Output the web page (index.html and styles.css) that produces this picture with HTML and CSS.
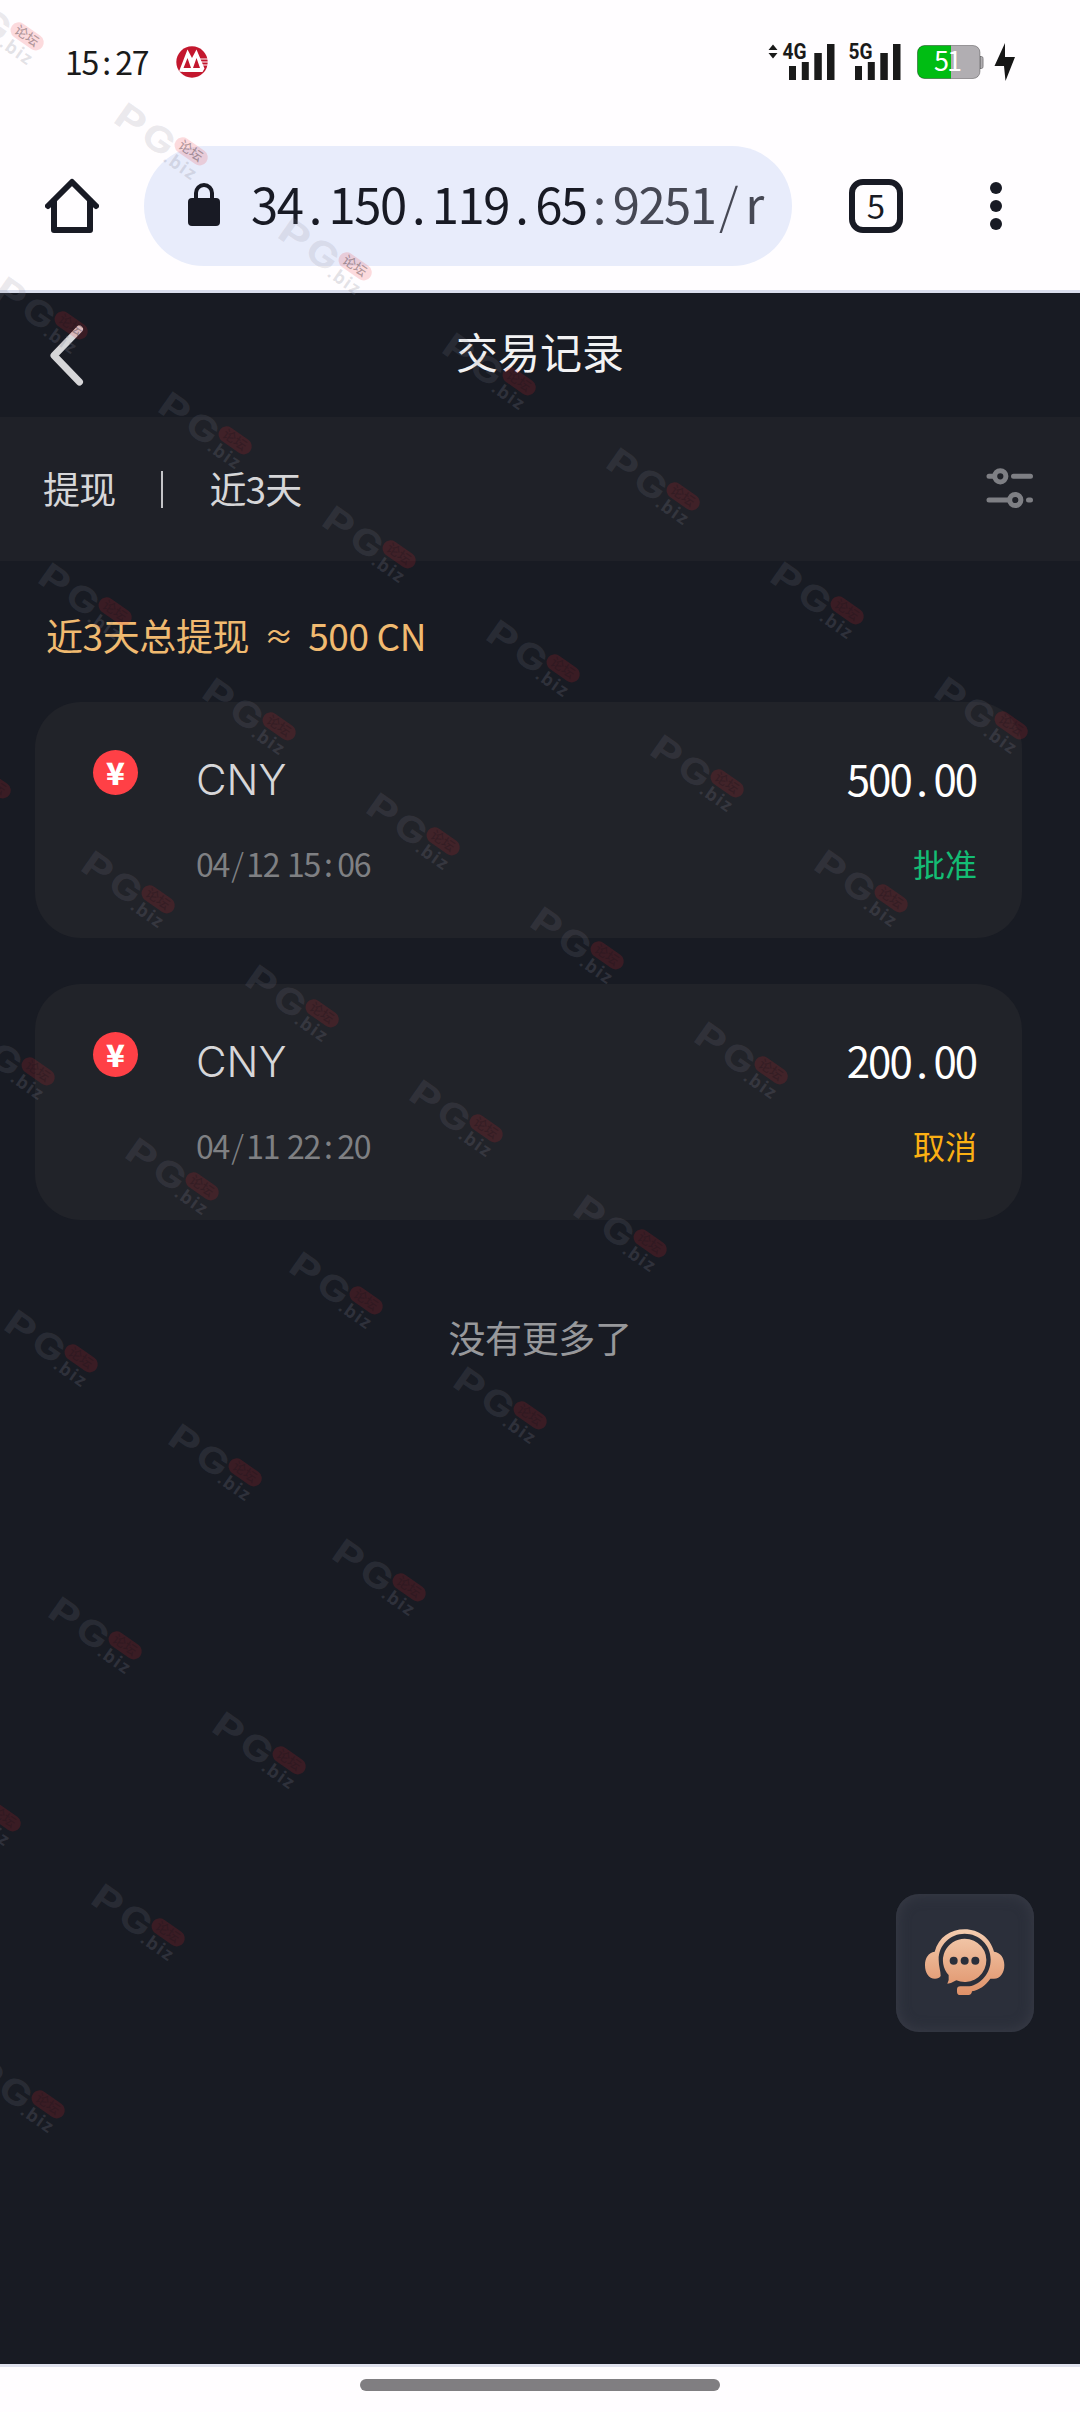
FILE: index.html
```html
<!DOCTYPE html>
<html lang="zh-CN">
<head>
<meta charset="utf-8">
<title>交易记录</title>
<link rel="stylesheet" href="styles.css">
</head>
<body>
<div class="screen">
  <div class="status-bar">
    <span class="clock num">15<i>:</i>27</span>
    <svg class="bank-icon" width="32" height="32" viewBox="0 0 32 32">
      <circle cx="16" cy="16" r="15.7" fill="#c3172e"/>
      <path d="M3 25.500 L11.500 3.500 L16 12 L20.500 3.500 L28.500 22.500 L26.500 26 H7 L5.500 22.500 H9 L11.500 13 L14 22.500 H18 L20.500 13 L24 22.500 H8 L6.500 26Z" fill="#fff"/>
      <path d="M11.500 12 L7.500 22 H15 Z M20.500 12 L17 22 H24 Z" fill="#c3172e"/>
      <path d="M23 13 H32 M24 16 H32 M25 19 H32" stroke="#fff" stroke-width="1"/>
    </svg>
    <div class="status-icons">
      <svg class="signal" width="68" height="52" viewBox="767 36 68 52">
        <path d="M768.500 50 L773 44.500 L777.500 50Z M768.500 53 L773 58.500 L777.500 53Z" fill="#1a1a1a"/>
        <text x="782.500" y="59" textLength="24" lengthAdjust="spacingAndGlyphs" class="net">4G</text>
        <path d="M789 66h7v14h-7z M801.800 62h7v18h-7z M814.300 53h7.500v27h-7.500z M827 44h7.500v36h-7.500z" fill="#1a1a1a"/>
      </svg>
      <svg class="signal second" width="53" height="52" viewBox="848 36 53 52">
        <text x="848.500" y="59" textLength="24" lengthAdjust="spacingAndGlyphs" class="net">5G</text>
        <path d="M855 66h7v14h-7z M867.800 62h7v18h-7z M880.300 53h7.500v27h-7.500z M893 44h7.500v36h-7.500z" fill="#1a1a1a"/>
      </svg>
      <svg class="battery" width="68" height="52" viewBox="917 37 68 52">
        <path d="M980 57.500h1.500q1.500 0 1.500 2v8q0 2-1.500 2h-1.500z" fill="#b1aeb2" stroke="#828083"/>
        <rect x="917.500" y="46.500" width="62.500" height="33" rx="7" fill="#b1aeb2"/>
        <path d="M951 46.500h-26.500a7 7 0 0 0-7 7v19a7 7 0 0 0 7 7h26.500z" fill="#00bd13"/>
        <rect x="917.500" y="46.500" width="62.500" height="33" rx="7" fill="none" stroke="#000" stroke-opacity=".3"/>
        <text x="934" y="72" textLength="28" class="level">51</text>
      </svg>
      <svg class="bolt" width="22" height="40" viewBox="994 43 22 40"><path d="M1005 44 L994.500 67 H1004 L1005.500 82 L1015 58 H1005Z" fill="#161616"/></svg>
    </div>
  </div>

  <div class="browser-bar">
    <svg class="home" width="54" height="56" viewBox="45 178 54 56" fill="none" stroke="#181a24" stroke-width="6" stroke-linecap="round" stroke-linejoin="round">
      <path d="M48 206 L72 182 L96 206"/><path d="M54 201 V230 H90 V201"/>
    </svg>
    <div class="address">
      <svg width="32" height="44" viewBox="188 183 32 44"><rect x="188" y="198" width="32" height="28" rx="4" fill="#181a24"/><path d="M196 200 V193 a8 8 0 0 1 16 0 V200" fill="none" stroke="#181a24" stroke-width="4"/></svg>
      <span class="url num">34<i>.</i>150<i>.</i>119<i>.</i>65<b><i>:</i>9251<i class="slash">/</i><i>r</i></b></span>
    </div>
    <div class="tabs">5</div>
    <div class="menu"><span></span><span></span><span></span></div>
  </div>

  <header class="page-header">
    <svg class="back" width="36" height="64" viewBox="49 324 36 64"><path d="M79.500 330 L54 356.500 L79.500 383" fill="none" stroke="#d6d6d8" stroke-width="7" stroke-linecap="round" stroke-linejoin="round"/></svg>
    <h1>交易记录</h1>
  </header>

  <div class="filter-bar">
    <span class="option">提现</span>
    <span class="divider"></span>
    <span class="option">近3天</span>
    <svg class="filter-icon" width="48" height="44" viewBox="986 467 48 44" fill="none" stroke="#7e7f84" stroke-width="5" stroke-linecap="round">
      <path d="M989 476.300H993 M1013.500 476.300H1030.500 M989 500H1008 M1028.500 500H1030.500"/>
      <circle cx="1000.300" cy="476.300" r="5.600"/><circle cx="1015.300" cy="500" r="5.600"/>
    </svg>
  </div>

  <main>
    <p class="summary"><span>近3天总提现</span><em>≈</em><span>500 CN</span></p>

    <section class="card">
      <div class="coin">¥</div>
      <div class="detail"><strong>CNY</strong><time class="num">04<i class="slash">/</i>12 15<i>:</i>06</time></div>
      <div class="result"><span class="amount num">500<i>.</i>00</span><span class="state approved">批准</span></div>
    </section>

    <section class="card">
      <div class="coin">¥</div>
      <div class="detail"><strong>CNY</strong><time class="num">04<i class="slash">/</i>11 22<i>:</i>20</time></div>
      <div class="result"><span class="amount num">200<i>.</i>00</span><span class="state cancelled">取消</span></div>
    </section>

    <p class="end">没有更多了</p>
  </main>

  <footer class="gesture-bar"><span></span></footer>

  <button class="support" aria-label="客服">
    <svg width="82" height="70" viewBox="192 205 246 210">
      <defs><linearGradient id="peach" x1="0" y1="208" x2="0" y2="406" gradientUnits="userSpaceOnUse"><stop offset="0" stop-color="#f4cdb0"/><stop offset="1" stop-color="#df9168"/></linearGradient></defs>
      <g fill="url(#peach)">
        <path d="M224 276 C236 232 272 209 314 209 C356 209 391 235 402 276 C422 278 433 295 433 316 C433 340 421 357 402 357 H391 C376 379 358 390 336 395 Q335 406 325 406 H301 Q291 406 291 396 V390 Q291 380 301 380 H328 C363 374 392 340 392 300 C392 255 357 222 314 222 C271 222 236 255 236 300 C236 320 242 334 242 349 Q237 357 225 357 C206 357 195 340 195 316 C195 295 205 279 224 276Z"/>
        <path d="M314 237 A65 65 0 1 1 289 362 Q275 371 262 372 Q268 362 266 346 A65 65 0 0 1 314 237Z"/>
      </g>
      <g fill="#2b2f3a"><circle cx="281" cy="303" r="12"/><circle cx="314" cy="303" r="12"/><circle cx="346" cy="303" r="12"/></g>
    </svg>
  </button>

  <svg class="watermarks" width="1080" height="2412" viewBox="0 1 1080 2412">
    <defs>
      <g id="mark" transform="rotate(35)">
        <text x="-3" y="0" textLength="30" lengthAdjust="spacingAndGlyphs" class="mark-big">P</text>
        <text x="30" y="0" textLength="32" lengthAdjust="spacingAndGlyphs" class="mark-big">G</text>
        <rect x="61" y="-29" width="37" height="16" rx="8" class="mark-pill"/>
        <text x="66" y="-16.500" class="mark-cjk">论坛</text>
        <text x="61" y="3" textLength="35" class="mark-small">.biz</text>
      </g>
    </defs>
    <use href="#mark" transform="translate(-50 9)"/>
    <use href="#mark" transform="translate(114 124)"/>
    <use href="#mark" transform="translate(278 239)"/>
    <use href="#mark" transform="translate(442 354)"/>
    <use href="#mark" transform="translate(606 469)"/>
    <use href="#mark" transform="translate(770 583)"/>
    <use href="#mark" transform="translate(934 698)"/>
    <use href="#mark" transform="translate(-6 298)"/>
    <use href="#mark" transform="translate(158 413)"/>
    <use href="#mark" transform="translate(322 527)"/>
    <use href="#mark" transform="translate(486 641)"/>
    <use href="#mark" transform="translate(650 756)"/>
    <use href="#mark" transform="translate(814 871)"/>
    <use href="#mark" transform="translate(38 584)"/>
    <use href="#mark" transform="translate(202 699)"/>
    <use href="#mark" transform="translate(366 814)"/>
    <use href="#mark" transform="translate(530 928)"/>
    <use href="#mark" transform="translate(694 1043)"/>
    <use href="#mark" transform="translate(-83 757)"/>
    <use href="#mark" transform="translate(81 872)"/>
    <use href="#mark" transform="translate(245 986)"/>
    <use href="#mark" transform="translate(409 1101)"/>
    <use href="#mark" transform="translate(573 1216)"/>
    <use href="#mark" transform="translate(-39 1044)"/>
    <use href="#mark" transform="translate(125 1159)"/>
    <use href="#mark" transform="translate(289 1273)"/>
    <use href="#mark" transform="translate(453 1388)"/>
    <use href="#mark" transform="translate(4 1331)"/>
    <use href="#mark" transform="translate(168 1445)"/>
    <use href="#mark" transform="translate(332 1560)"/>
    <use href="#mark" transform="translate(48 1618)"/>
    <use href="#mark" transform="translate(212 1733)"/>
    <use href="#mark" transform="translate(-73 1790)"/>
    <use href="#mark" transform="translate(91 1905)"/>
    <use href="#mark" transform="translate(-29 2077)"/>
  </svg>
</div>
</body>
</html>
```
FILE: styles.css
```css
* { box-sizing: border-box; }

body {
  margin: 0;
  font-family: "Noto Sans CJK SC", sans-serif;
  font-weight: 400;
  background: #181b23;
}

h1, p { margin: 0; font-weight: 400; }

.screen {
  position: relative;
  width: 1080px;
  height: 2412px;
  display: flex;
  flex-direction: column;
  overflow: hidden;
  background: #181b23;
}

/* Digits sit on a half-em grid, punctuation fills a whole cell */
.num { letter-spacing: -0.04em; white-space: nowrap; }
.num i {
  display: inline-block;
  width: 0.54em;
  text-align: center;
  font-style: normal;
  letter-spacing: 0;
}
.num .slash { font-weight: 300; }

.status-bar {
  height: 124px;
  padding: 0 64px 0 65px;
  display: flex;
  align-items: center;
  background: #fffdff;
}
.clock { font-size: 32px; line-height: 40px; margin-top: -3px; color: #1a1a1a; width: 111px; }
.status-icons { margin-left: auto; display: flex; align-items: center; }
.signal, .battery { overflow: visible; }
.second { margin-left: 13px; }
.battery { margin-left: 16px; }
.bolt { margin-left: 9px; }
.net { font: 700 22px "Roboto", sans-serif; fill: #1a1a1a; }
.level { font: 400 27px "Noto Sans CJK SC", sans-serif; fill: #fff; }

.browser-bar {
  height: 169px;
  padding: 22px 78px 0 45px;
  display: flex;
  align-items: flex-start;
  background: #fffdff;
  border-bottom: 3px solid #dadeed;
}
.home { margin-top: 32px; }
.address {
  width: 648px;
  height: 120px;
  margin-left: 45px;
  padding-left: 44px;
  border-radius: 60px;
  background: #e8ecfb;
  display: flex;
  align-items: center;
}
.address svg { margin-top: -2px; }
.url {
  margin: -6px 0 0 31px;
  font-size: 49px;
  line-height: 70px;
  letter-spacing: -1.5px;
  color: #181a24;
}
.url i { width: 26.2px; }
.url b { font-weight: 400; color: #464854; }
.tabs {
  width: 54px;
  height: 54px;
  margin: 33px 0 0 57px;
  border: 6px solid #181a24;
  border-radius: 14px;
  font-size: 33px;
  line-height: 41px;
  text-align: center;
  color: #181a24;
}
.menu { margin: 36px 0 0 87px; display: flex; flex-direction: column; gap: 6px; }
.menu span { width: 12px; height: 12px; border-radius: 50%; background: #181a24; }

.page-header {
  height: 124px;
  padding-left: 49px;
  display: flex;
  align-items: center;
}
.page-header h1 {
  flex: 1;
  margin: -8px 85px 0 0;
  text-align: center;
  font-size: 42px;
  line-height: 60px;
  color: #f2f2f3;
}

.filter-bar {
  height: 144px;
  padding: 0 46px 0 43px;
  display: flex;
  align-items: center;
  background: #1f2128;
  color: #d6d6d8;
  font-size: 37px;
}
.option { margin-top: -3px; letter-spacing: -0.8px; }
.divider { width: 2px; height: 37px; margin: 0 46px 0 46px; background: #c4c4c8; }
.filter-icon { margin-left: auto; }

main { flex: 1; padding: 0 58px 0 35px; }

.summary {
  padding: 45px 0 0 11px;
  height: 141px;
  font-size: 37px;
  line-height: 58px;
  letter-spacing: -0.4px;
  color: #f0ba70;
  display: flex;
}
.summary em { font-style: normal; font-size: 29px; width: 59px; text-align: center; }

.card {
  height: 236px;
  margin-bottom: 46px;
  padding: 0 45px 0 58px;
  border-radius: 46px;
  background: #212329;
  display: flex;
}
.coin {
  width: 45px;
  height: 45px;
  margin-top: 48px;
  border-radius: 50%;
  background: #ff4046;
  color: #fff;
  font: 900 31px/43px "Noto Sans CJK SC", sans-serif;
  text-align: center;
}
.detail, .result { display: flex; flex-direction: column; padding-top: 46px; }
.detail { margin-left: 58px; }
.detail strong {
  font-family: "Inter", sans-serif;
  font-size: 42px;
  line-height: 64px;
  height: 60px;
  font-weight: 300;
  color: #d6d6d8;
}
.detail time {
  margin-top: 25px;
  font-size: 32px;
  line-height: 60px;
  letter-spacing: -1.3px;
  word-spacing: 2px;
  color: #7f8083;
}
.result { margin-left: auto; align-items: flex-end; }
.amount { font-size: 42px; line-height: 60px; color: #fff; letter-spacing: -2px; margin-right: 1px; }
.state { margin-top: 25px; font-size: 32px; line-height: 60px; }
.approved { color: #14bd74; }
.cancelled { color: #fbb013; }

.end {
  padding-top: 41px;
  margin-right: -23px;
  text-align: center;
  font-size: 37px;
  line-height: 60px;
  letter-spacing: -0.4px;
  color: #97989b;
}

.gesture-bar {
  height: 48px;
  padding-top: 12px;
  border-top: 3px solid #dfe1ed;
  background: #fffdff;
}
.gesture-bar span {
  display: block;
  width: 360px;
  height: 12px;
  margin: 0 auto;
  border-radius: 6px;
  background: #807e81;
}

/* Floating support button */
.support {
  position: absolute;
  left: 896px;
  top: 1894px;
  width: 138px;
  height: 138px;
  padding: 0;
  border: 0;
  border-radius: 23px;
  background: #2b2f3a;
  box-shadow: inset 0 0 14px #3a3d48;
  display: flex;
  align-items: center;
  justify-content: center;
}

/* Tiled watermark over the whole screen */
.watermarks { position: absolute; left: 0; top: 0; pointer-events: none; }
.mark-big { font: 700 35px "Inter", sans-serif; fill: rgba(130, 130, 145, 0.17); }
.mark-small { font: 700 18px "Open Sans", sans-serif; fill: rgba(130, 130, 145, 0.22); }
.mark-cjk { font: 500 13px "Noto Sans CJK SC", sans-serif; fill: rgba(30, 20, 28, 0.35); }
.mark-pill { fill: rgba(235, 35, 45, 0.16); }
```
